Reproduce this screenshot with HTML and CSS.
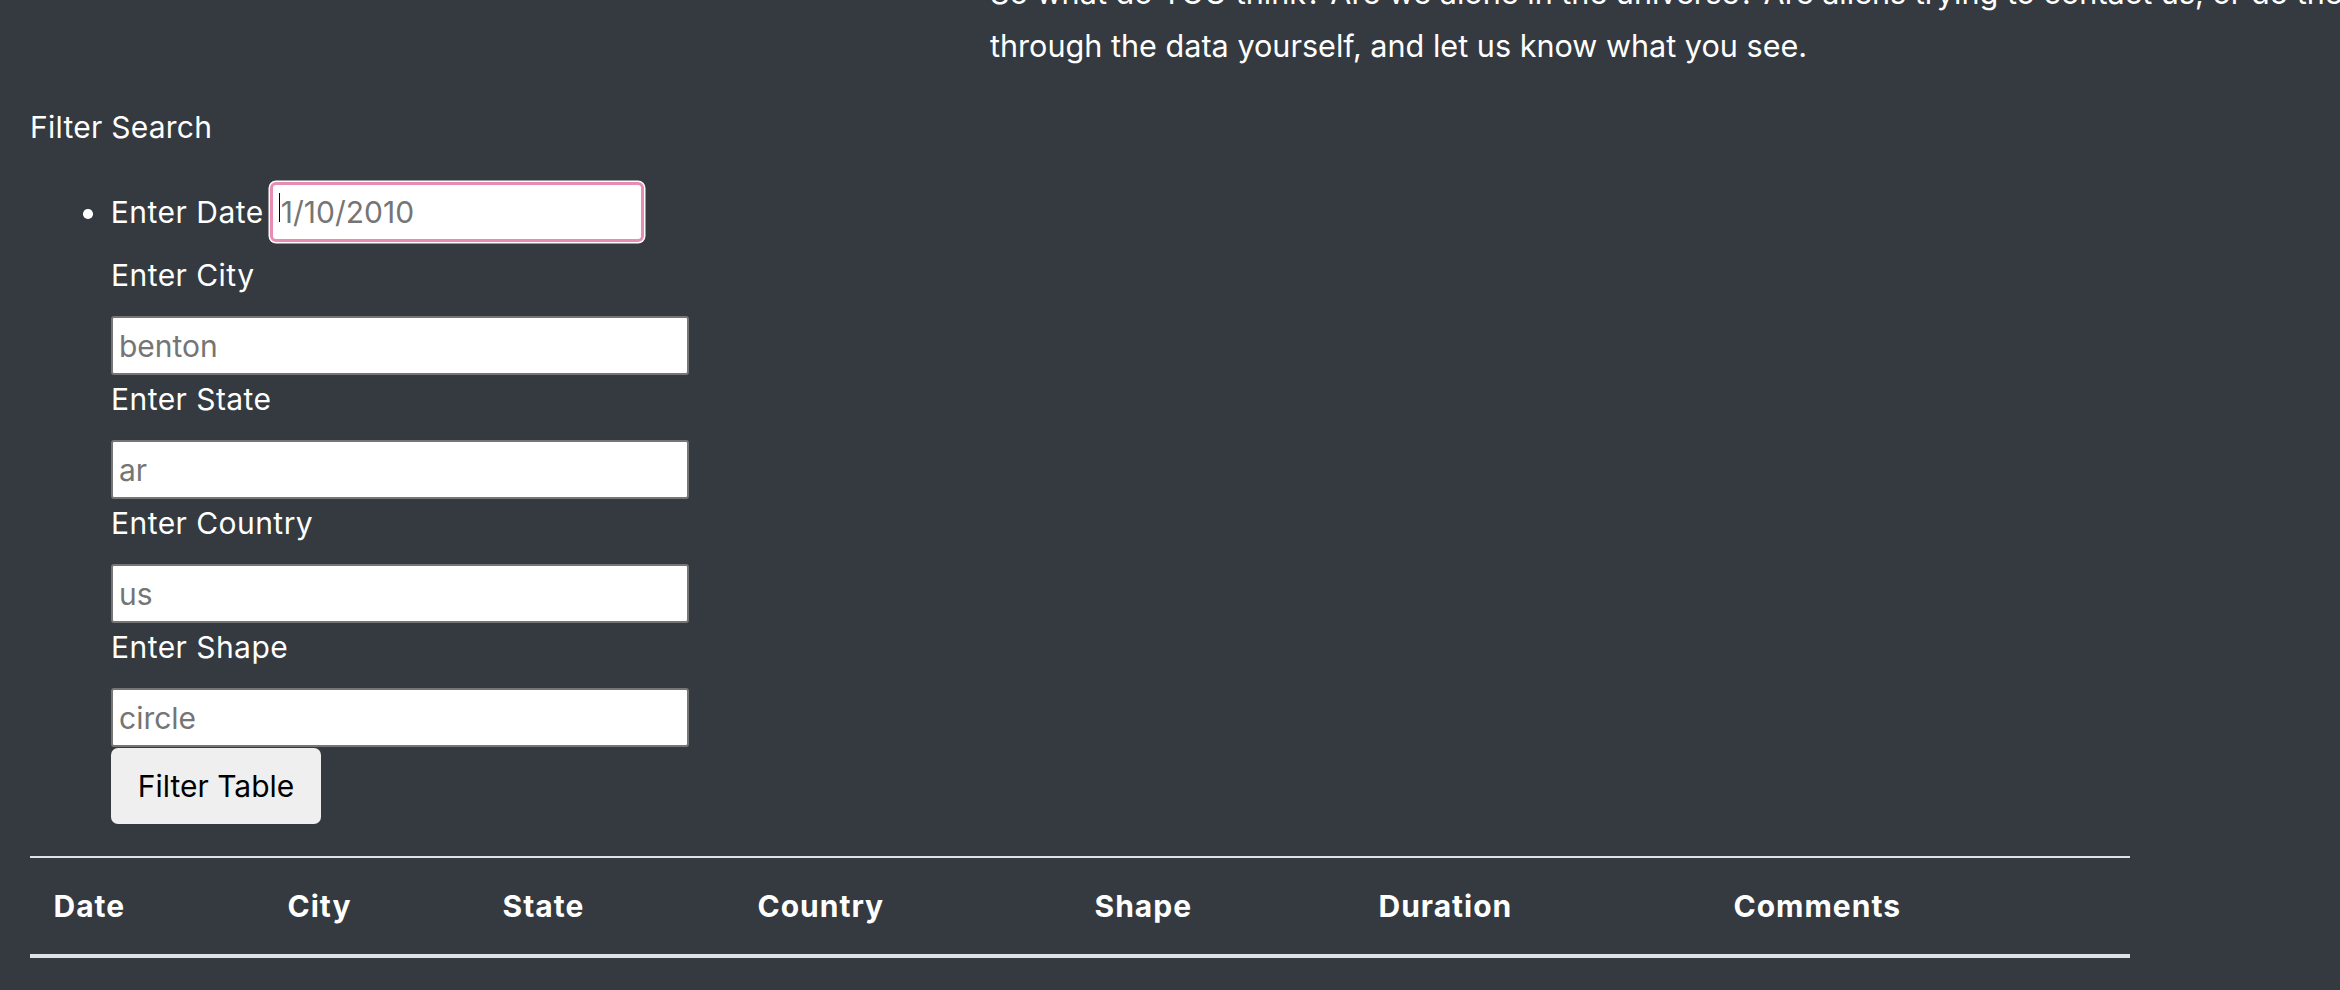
FILE: index.html
```html
<!DOCTYPE html>
<html lang="en">
<head>
<meta charset="utf-8">
<title>UFO Sightings</title>
<link rel="stylesheet" href="styles.css">
</head>
<body>
<div class="page">
  <section class="intro">
    <p class="intro-text">So what do YOU think? Are we alone in the universe? Are aliens trying to contact us, or do they want to stay hidden? Dig<br>through the data yourself, and let us know what you see.</p>
  </section>

  <section class="filter-panel">
    <p class="filter-title">Filter Search</p>
    <ul class="filters">
      <li class="filter">
        <div class="date-row">
          <label for="datetime" class="date-label">Enter Date</label>
          <span class="date-field">
            <input id="datetime" class="date-input" type="text" placeholder="1/10/2010">
            <span class="caret"></span>
          </span>
        </div>
        <label for="city" class="field-label">Enter City</label>
        <input id="city" class="field" type="text" placeholder="benton">
        <label for="state" class="field-label">Enter State</label>
        <input id="state" class="field" type="text" placeholder="ar">
        <label for="country" class="field-label">Enter Country</label>
        <input id="country" class="field" type="text" placeholder="us">
        <label for="shape" class="field-label">Enter Shape</label>
        <input id="shape" class="field" type="text" placeholder="circle">
        <button class="filter-btn" type="button">Filter Table</button>
      </li>
    </ul>
  </section>

  <table class="ufo-table">
    <thead>
      <tr>
        <th class="col-date">Date</th>
        <th class="col-city">City</th>
        <th class="col-state">State</th>
        <th class="col-country">Country</th>
        <th class="col-shape">Shape</th>
        <th class="col-duration">Duration</th>
        <th class="col-comments">Comments</th>
      </tr>
    </thead>
    <tbody></tbody>
  </table>
</div>
</body>
</html>
```

FILE: styles.css
```css
* {
  box-sizing: border-box;
}

html,
body {
  margin: 0;
}

body {
  background: #343a40;
  color: #fff;
  font-family: Inter, "Noto Sans", sans-serif;
  font-size: 30px;
  line-height: 45px;
  overflow: hidden;
}

.page {
  padding: 0 30px;
}

/* intro paragraph (scrolled partly out of view) */
.intro {
  padding-left: 960px;
  margin-top: -33.6px;
}

.intro-text {
  margin: 0;
  font-size: 30.6px;
  line-height: 53px;
  white-space: nowrap;
}

/* filter panel */
.filter-title {
  margin: 32.2px 0 32.5px;
  letter-spacing: 0.25px;
}

.filters {
  margin: 0;
  padding-left: 81px;
  list-style: none;
}

.date-row {
  display: flex;
  align-items: baseline;
  gap: 6px;
  margin-bottom: 11px;
}

.date-row::before {
  content: "";
  width: 9.5px;
  height: 9.5px;
  border-radius: 50%;
  background: #fff;
  margin-left: -28px;
  margin-right: 12.3px;
  align-self: center;
  margin-top: 4px;
}

.date-label {
  line-height: 45px;
  letter-spacing: 0.5px;
}

.date-field {
  position: relative;
  display: flex;
}

.date-input {
  width: 374px;
  height: 60px;
  border: 3.3px solid #e78cb2;
  border-radius: 6px;
  box-shadow: 0 0 0 1.5px #fff;
  padding: 0 8px;
  font: inherit;
  color: #000;
  background: #fff;
  outline: none;
}

.caret {
  position: absolute;
  left: 9px;
  top: 11px;
  width: 1.5px;
  height: 29px;
  background: #000;
}

.field-label {
  display: block;
  margin: 2px 0 18px;
  line-height: 45px;
  letter-spacing: 0.45px;
}

.field {
  display: block;
  width: 578px;
  height: 59px;
  border: 2px solid #767676;
  border-radius: 3px;
  padding: 0 6px;
  font: inherit;
  color: #000;
  background: #fff;
  outline: none;
}

.date-input::placeholder,
.field::placeholder {
  color: #757575;
  opacity: 1;
}

.filter-btn {
  display: block;
  margin-top: 1px;
  width: 210px;
  height: 76px;
  border: 0;
  border-radius: 7px;
  padding: 0;
  background: #efefef;
  color: #000;
  font: inherit;
}

/* table */
.ufo-table {
  margin-top: 32px;
  width: 2100px;
  border-collapse: separate;
  border-spacing: 0;
  table-layout: fixed;
}

.ufo-table th {
  text-align: left;
  font-weight: 700;
  line-height: 45px;
  letter-spacing: 1px;
  padding: 26px 22px 24.5px 23.5px;
  border-top: 2px solid #dee2e6;
  border-bottom: 4px solid #dee2e6;
}

.col-date { width: 234px; }
.col-city { width: 215px; }
.col-state { width: 255px; }
.col-country { width: 337px; }
.col-shape { width: 284px; }
.col-duration { width: 355px; }
.col-comments { width: 420px; }
```
